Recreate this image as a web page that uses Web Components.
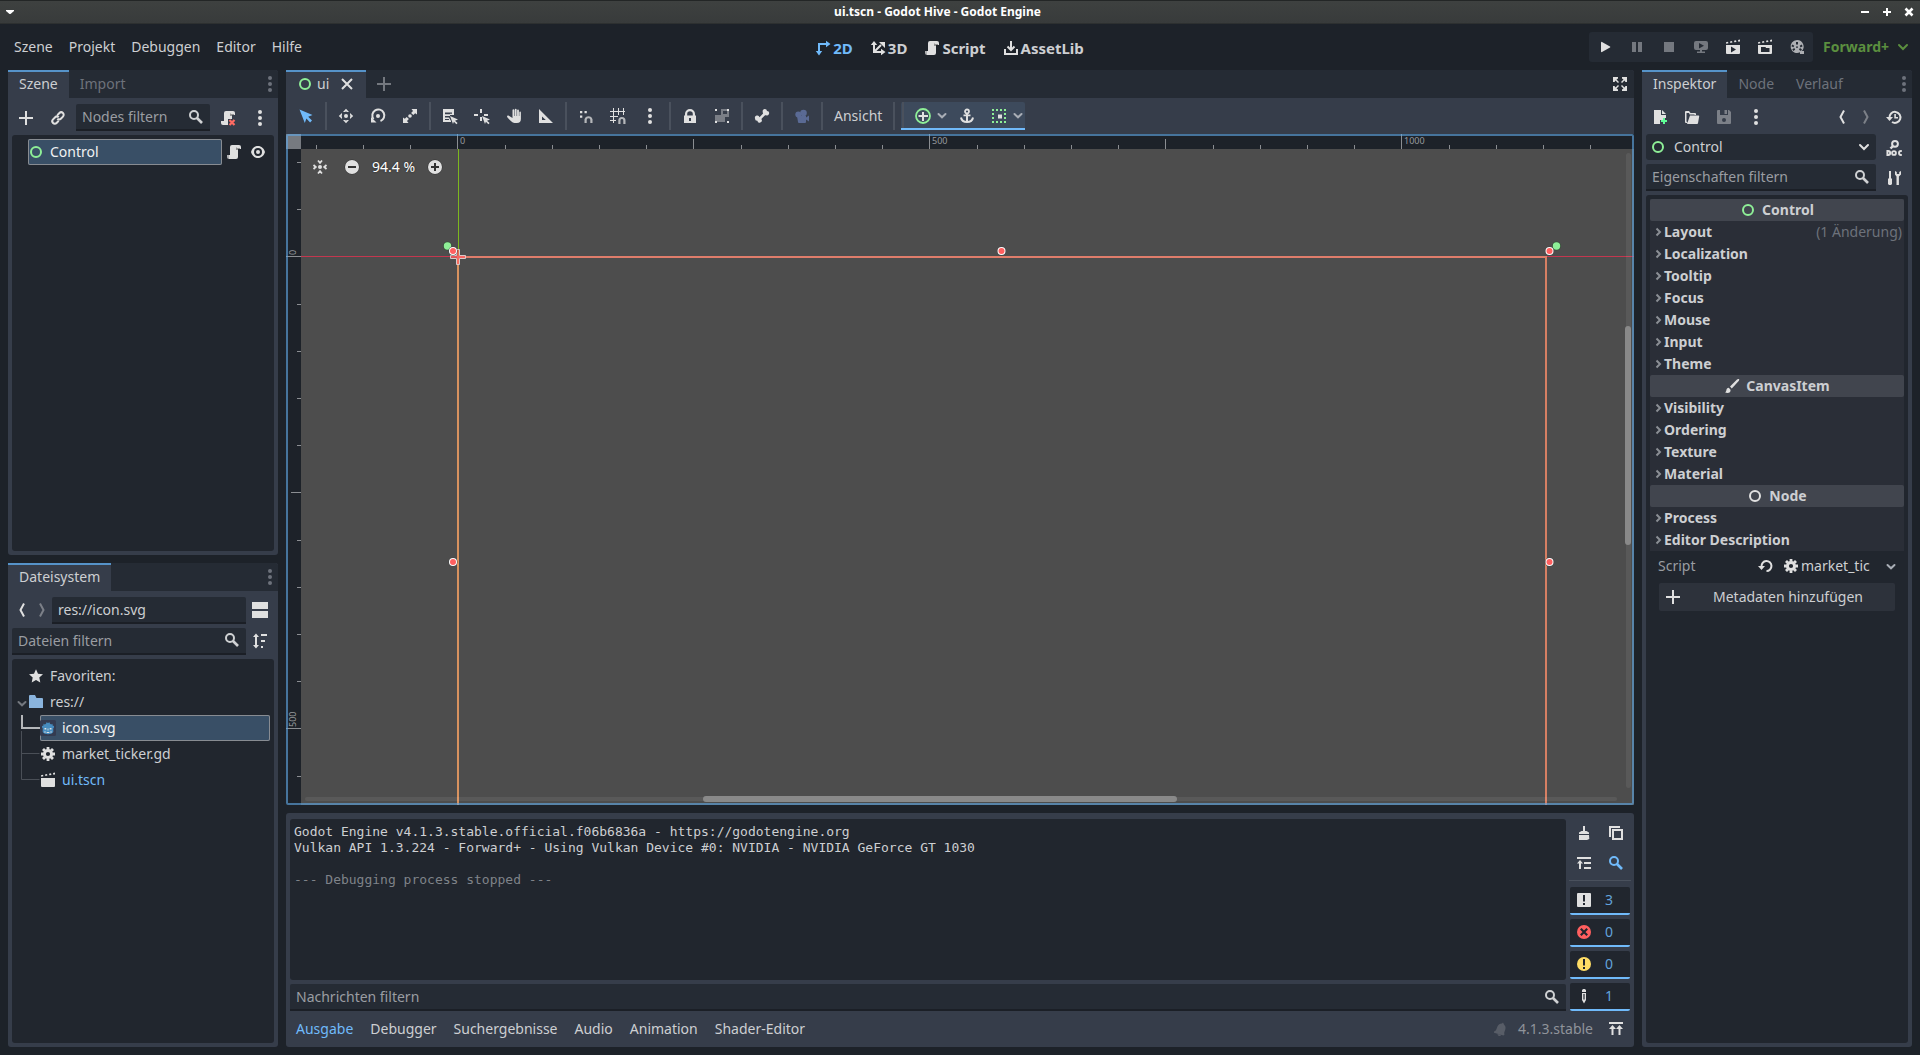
<!DOCTYPE html>
<html lang="de">
<head>
<meta charset="utf-8">
<title>ui.tscn - Godot Hive - Godot Engine</title>
<style>
html,body{height:100%;margin:0}
body{
  --bg:#1d2229;--bar:#252b34;--panel:#363d4a;--well:#21262e;--text:#cdcfd2;--dim:#6d727b;--soft:#9a9da2;
  --icon:#e0e0e0;--accent:#70bafa;--line:#5693c9;--green:#8eef97;
  background:var(--bg);color:var(--text);font:14px/20px "Noto Sans","Open Sans",sans-serif;overflow:hidden}
</style>
</head>
<body>
<godot-editor></godot-editor>
<script>
const K='fill="none" stroke="currentColor"';
const CURSOR='<path d="M8 8l8 3.4-3 1.3 2.6 2.4-1.2 1.2-2.5-2.5L11 16z"/>';
const SCROLL='<path d="M6 1a2 2 0 0 0-2 2v8h5v2a2 2 0 0 1-2 2h3a2 2 0 0 0 2-2V5h3V3a2 2 0 0 0-2-2z"/><path opacity=".75" d="M1 11h3v4H3a2 2 0 0 1-2-2z"/><path d="M3 11h6v4H3z"/><path opacity=".55" fill="#555" d="M10 3v3h2V5h2V4h-3z"/>';
const MAGNET='<path opacity=".75" '+K+' stroke-width="2.2" d="M9.4 16v-3.5a2.4 2.4 0 0 1 5 0V16"/>';
const CLAP='<path d="M1 6h14v8a1 1 0 0 1-1 1H2a1 1 0 0 1-1-1z"/><path d="M1 3.2l2-.4.4 1.5-2.2.5zM5 2.4l2-.4.4 1.5-2 .4zM9 1.7l2-.4.4 1.6-2 .3zM13 1l2-.4V2.400l-1.700.3z"/>';
const ICONS={
 add:'<path d="M7 1v6H1v2h6v6h2V9h6V7H9V1z"/>',
 link:'<g transform="rotate(-45 8 8)" '+K+' stroke-width="2"><path d="M6.500 10.500h-3a2.500 2.500 0 0 1 0-5h3a2.500 2.500 0 0 1 2.500 2.500M9.500 5.500h3a2.500 2.500 0 0 1 0 5h-3A2.500 2.500 0 0 1 7 8"/></g>',
 search:'<g '+K+'><circle cx="6" cy="6" r="4" stroke-width="2"/><path stroke-width="2.600" d="M9 9l5 5"/></g>',
 dots:'<circle cx="8" cy="2" r="2"/><circle cx="8" cy="8" r="2"/><circle cx="8" cy="14" r="2"/>',
 script:SCROLL,
 scriptx:'<path d="M6 1a2 2 0 0 0-2 2v8h4v-2h4V5h3V3a2 2 0 0 0-2-2zM1 11h7v4H3a2 2 0 0 1-2-2z"/><path fill="#555" opacity=".55" d="M10 3v3h2V5h2V4h-3z"/><path stroke="#ff6b63" stroke-width="2.200" d="M9.500 10l5 5M14.500 10l-5 5"/>',
 eye:'<path fill-rule="evenodd" d="M8 2C4.500 2 2 4.500 1 8c1 3.500 3.500 6 7 6s6-2.500 7-6c-1-3.500-3.500-6-7-6zm0 2a4 4 0 1 1 0 8 4 4 0 0 1 0-8z"/><circle cx="8" cy="8" r="2"/>',
 ring:'<circle cx="8" cy="8" r="5" '+K+' stroke-width="2"/>',
 close:'<path '+K+' stroke-width="2" d="M3 3l10 10M13 3L3 13"/>',
 select:'<path d="M1.500 1.500l13 5.500-4.300 1.700 3.800 3.900-1.900 1.900-3.700-3.900L6.800 15z"/>',
 move:'<circle cx="8" cy="8" r="2"/><path d="M8 .8l3 3.200H9.200L8 3.600 6.800 4H5zM8 15.200l3-3.200H9.200l-1.200.4-1.200-.4H5zM.8 8L4 5v1.800L3.600 8l.4 1.200V11zM15.200 8L12 5v1.800l.4 1.200-.4 1.200V11z"/>',
 rotate:'<path '+K+' stroke-width="2" d="M10.500 13A6 6 0 1 0 3.500 11"/><path d="M1 9v5.500h5.500z"/><circle cx="8" cy="8" r="2"/>',
 scale:'<path d="M9.500 1H15v5.500l-1.800-1.300-1.900 1.900-2.200-2.200L11 3zM6.500 15H1V9.500l1.800 1.300 1.900-1.900 2.200 2.200L5 13z"/><circle cx="8" cy="8" r="1.800"/>',
 listsel:'<path fill-rule="evenodd" d="M1 1h11v6H8V5.800h2V4.600H3v1.600h5V8H3v1.600h4L9 13v1H1zM3 12v-1h4v1z"/>'+CURSOR,
 pivot:'<path d="M6 1h2v4H6zM6 9h2v4H6zM0 6h4v2H0zM10 6h4v2h-4z"/>'+CURSOR,
 pan:'<path d="M6.500 2.200a.9.900 0 0 1 1.800 0V8h.5V1.600a.9.900 0 0 1 1.800 0V8h.5V2.400a.9.900 0 0 1 1.800 0V8h.4V4.400a.8.800 0 0 1 1.600 0V11a4 4 0 0 1-4 4H8.500C6 15 3.500 11.500 1.300 9.200c-.8-1 .5-2 1.500-1.400L6.500 10z"/>',
 ruler:'<path fill-rule="evenodd" d="M1 1v14h14zm3 7.500L7.800 12H4z"/>',
 snap:'<path d="M2 3h2.300v2.300H2zM6.500 3h2.300v2.300H6.500zM2 7.500h2.300v2.300H2z"/><path opacity=".75" '+K+' stroke-width="2.200" d="M7.600 15v-3.500a3 3 0 0 1 5.800 0V15"/>',
 gridsnap:'<path d="M3 0h1v15H3zM8 0h1v7H8zM13 0h1v7h-1zM0 3h15v1H0zM0 8h8v1H0zM0 12h6v1H0z"/>'+MAGNET,
 lock:'<path fill-rule="evenodd" d="M8 1a5 5 0 0 0-5 5v1.500H2V15h12V7.500h-1V6a5 5 0 0 0-5-5zm0 2.200A2.800 2.800 0 0 1 10.800 6v1.500H5.200V6A2.800 2.800 0 0 1 8 3.200zM7 10h2v3H7z"/>',
 group:'<path d="M1 1h2v2H1zM13 1h2v2h-2zM1 13h2v2H1zM13 13h2v2h-2z"/><path opacity=".4" d="M7 1h6v2H9v3h4V3h2v6h-4v5H3v1H1V7h6z"/>',
 bone:'<path d="M10.800 1a2.200 2.200 0 0 0-2 3 2 2 0 0 0 .3 1.500L5.500 9.200A2.300 2.300 0 0 0 1 10.500a2.200 2.200 0 0 0 2.400 2.200 2.200 2.200 0 1 0 4.100-1.400c-.1-.5 0-.6.300-.9l3-3c.4-.3.600-.3 1.200-.2a2.200 2.200 0 1 0 1-4.200A2.200 2.200 0 0 0 10.800 1z"/>',
 camera:'<circle cx="9.500" cy="5" r="3.300"/><circle cx="4.300" cy="6.500" r="3"/><path d="M3 8h9v6a1 1 0 0 1-1 1H5a1 1 0 0 1-1-1zM12 9.500L15 7.500v6l-3-2z"/>',
 anchor:'<circle cx="8" cy="3.500" r="2" '+K+' stroke-width="1.800"/><path d="M7 5h2v8H7zM4.500 6.500h7v1.800h-7z"/><path '+K+' stroke-width="2" d="M2 9.500c.5 3 3 4.500 6 4.500s5.500-1.500 6-4.500"/>',
 cpos:'<circle cx="8" cy="8" r="7" fill="none" stroke="#8eef97" stroke-width="1.800"/><path d="M7 4h2v3h4v2H9v4H7V9H3.500V7H7z"/>',
 cbox:'<g fill="#8eef97"><path d="M1 1h2v2H1zM5 1h2v2H5zM9 1h2v2H9zM13 1h2v2h-2zM1 13h2v2H1zM5 13h2v2H5zM9 13h2v2H9zM13 13h2v2h-2zM1 5h2v2H1zM1 9h2v2H1zM13 5h2v2h-2zM13 9h2v2h-2z"/></g><path d="M7 6.500h4v4H7z"/>',
 chev:'<path '+K+' stroke-width="2" stroke-linecap="round" d="M4.500 7L8 10.300 11.500 7"/>',
 chevbig:'<path '+K+' stroke-width="2" stroke-linecap="round" d="M4 6l4 4 4-4"/>',
 right:'<path '+K+' stroke-width="2" d="M6.500 4.500L10 8l-3.500 3.500"/>',
 back:'<path '+K+' stroke-width="2" d="M10 1.500L6.500 8l3.500 6.500"/>',
 fwd:'<path '+K+' stroke-width="2" d="M6 1.500L9.500 8 6 14.500"/>',
 mode2d:'<path '+K+' stroke-width="2" d="M4 12V4h8"/><path d="M11 .8L15.500 4 11 7.200zM.8 11L4 15.500 7.200 11z"/>',
 mode3d:'<path '+K+' stroke-width="2" d="M4 3v9h9M4 12l7-7"/><path d="M.8 5L4 1l3.200 4zM11 8.800L15.500 12 11 15.200zM9 2h6v6z"/>',
 asset:'<path d="M1 9v6h14V9h-2v4H3V9z"/><path '+K+' stroke-width="2" d="M8 1v9M4.500 6.500L8 10l3.500-3.500"/>',
 play:'<path d="M4 3.500v9a.7.700 0 0 0 1 .5l8-4.500a.6.600 0 0 0 0-1L5 3a.7.700 0 0 0-1 .5z"/>',
 pause:'<path d="M3 3h4v10H3zM9 3h4v10H9z"/>',
 stop:'<path d="M3 3h10v10H3z"/>',
 remote:'<path fill-rule="evenodd" d="M3 2h10a2 2 0 0 1 2 2v5a2 2 0 0 1-2 2H9v1.500h3V14H4v-1.500h3V11H3a2 2 0 0 1-2-2V4a2 2 0 0 1 2-2zm3 2v5.500l5-2.700z"/>',
 playscene:CLAP.replace('v8a1 1 0 0 1-1 1H2a1 1 0 0 1-1-1z','v8a1 1 0 0 1-1 1H2a1 1 0 0 1-1-1zM6 7.500v6l5-3z').replace('<path','<path fill-rule="evenodd"'),
 playcustom:CLAP.replace('v8a1 1 0 0 1-1 1H2a1 1 0 0 1-1-1z','v8a1 1 0 0 1-1 1H2a1 1 0 0 1-1-1zM4 8v5h8.500V9H9L8.500 8z').replace('<path','<path fill-rule="evenodd"'),
 clap:CLAP,
 movie:'<path fill-rule="evenodd" d="M8 1a6.500 6.500 0 1 0 3 12.300V15h4v-3h-2.200A6.500 6.500 0 0 0 8 1zM7 3h2v2.500H7zM3.300 5.500l2 1.200-.9 1.600-2-1zM10.700 6.700l2-1.200.9 1.700-2 1.200zM3.300 10.200l2-1.200.9 1.700-2 1.200zM10 10.700l.9-1.700 2 1.200-.9 1.700zM7 7.500h2v1.200H7z"/>',
 expand:'<path d="M1 1h5v1.500L4.500 3.500 7 6 6 7 3.500 4.500 2.500 6H1zM15 1h-5v1.500l1.500 1L9 6l1 1 2.500-2.500 1 1.500H15zM1 15h5v-1.500l-1.500-1L7 10 6 9l-2.500 2.500-1-1.500H1zM15 15h-5v-1.500l1.500-1L9 10l1-1 2.500 2.500 1-1.500H15z"/>',
 newres:'<path d="M2 1h7v5h5v3h-3v2H8v4H2z"/><path d="M10 1l4 4h-4z"/><path fill="#5fff97" d="M11 9h2v2h2v2h-2v2h-2v-2H9v-2h2z"/>',
 open:'<path d="M1 3a1 1 0 0 1 1-1h3l1.500 2H11a1 1 0 0 1 1 1v1h-1.500V5.500H5.600L5 4H2.500v8.500L4 14H2a1 1 0 0 1-1-1z"/><path d="M6 6.500h8.500a.7.700 0 0 1 .7.800L14 14.300a1 1 0 0 1-1 .7H3z"/>',
 save:'<path fill-rule="evenodd" d="M2 1h2v5h8V1h1l2 2v11a1 1 0 0 1-1 1H2a1 1 0 0 1-1-1V2a1 1 0 0 1 1-1zm6 8a2 2 0 1 0 0 4 2 2 0 0 0 0-4z"/><path d="M8.500 1H11v4H8.500z"/>',
 history:'<path '+K+' stroke-width="2" d="M3.500 9A5.500 5.500 0 1 1 6 13"/><path d="M0 8h7L3.500 12zM8.300 5h1.600v3H12v1.600H8.300z"/>',
 doc:'<circle cx="9" cy="3.800" r="2.900" '+K+' stroke-width="2"/><path '+K+' stroke-width="2.400" d="M7.200 5.800L4.500 8.500"/><g '+K+' stroke-width="1.900"><path d="M1.400 11v4h.8a2 2 0 0 0 0-4z"/><circle cx="8" cy="13" r="1.900"/><path d="M15.800 11H15a2 2 0 0 0 0 4h.8"/></g>',
 tools:'<path d="M3 1h2v7.500h1V14l-1 1H3l-1-1V8.500h1zM9 1v3.500l1.500 2V15h2.400V6.500L15 4.500V1l-1.800 1v2h-2.400V2z"/>',
 brush:'<path d="M15 1c-.8-.3-1.500 0-2 .4L6 8.500l1.800 1.900L14.700 3c.5-.6.700-1.400.3-2zM4.800 9.700c-1.500 0-2.300 1-2.400 2.300-.1 1.200-.6 2-1.400 2.300 2.700 1.500 6.200.3 5.500-2.600z"/>',
 revert:'<path '+K+' stroke-width="2" d="M3.500 8.500A5 5 0 1 1 8.500 13"/><path d="M0 8h7l-3.500 4z"/>',
 gear:'<circle cx="8" cy="8" r="3.600" '+K+' stroke-width="3"/><path '+K+' stroke-width="2.800" d="M8 1v2.500M8 12.500V15M1 8h2.500M12.500 8H15M3 3l1.800 1.800M11.200 11.200L13 13M13 3l-1.800 1.800M4.800 11.200L3 13"/>',
 split:'<path d="M0 0h16v7H0zM0 9h16v7H0z"/>',
 sort:'<path d="M3 4v8H1l3 3.500L7 12H5V4h2L4 .5 1 4zM9 1h6v2H9zM9 7h4v2H9zM9 13h2v2H9z"/>',
 star:'<path d="M8 1.200l2 4.500 5 .6-3.700 3.300 1 4.900L8 12l-4.300 2.500 1-4.900L1 6.300l5-.6z"/>',
 folder:'<path d="M1 2a1 1 0 0 1 1-1h5l1.500 3H14a1 1 0 0 1 1 1v9H1z"/>',
 godot:'<path fill="#343b50" d="M1.500 0h13A1.500 1.500 0 0 1 16 1.500v13a1.500 1.500 0 0 1-1.500 1.500h-13A1.500 1.500 0 0 1 0 14.500v-13A1.500 1.500 0 0 1 1.500 0z"/><path fill="#478cbf" d="M3.500 5.500V3.800l1.300.6 1.200-.6.500-1.600 1.500.7 1.500-.7.500 1.600 1.200.6 1.300-.6v1.700L14 6v1.500l-.7.700V12c-1 1.500-3 2.200-5.300 2.200S3.700 13.500 2.700 12V8.200L2 7.500V6z"/><path fill="#e0e0e0" d="M4.500 8h1.800v1.600H4.500zM9.700 8h1.800v1.600H9.700zM7.600 8.500h.8v2h-.8zM4.200 11.500h1.500v1H4.200zM10.300 11.500h1.500v1h-1.500zM6.700 12h2.600v1H6.700z"/>',
 center:'<circle cx="8" cy="8" r="2"/><path '+K+' stroke-width="1.800" d="M6 1.500l2 2.300 2-2.300M6 14.500l2-2.300 2 2.300M1.500 6l2.300 2-2.300 2M14.500 6l-2.300 2 2.300 2"/>',
 minus:'<circle cx="8" cy="8" r="7.500" fill="#333"/><circle cx="8" cy="8" r="7"/><path fill="#333" d="M4 7h8v2H4z"/>',
 plus:'<circle cx="8" cy="8" r="7.500" fill="#333"/><circle cx="8" cy="8" r="7"/><path fill="#333" d="M7 4h2v3h3v2H9v3H7V9H4V7h3z"/>',
 broom:'<path d="M7 1h2v5h1.500L13 7.500V9H3V7.500L5.500 6H7zM3 10h10l.3 4-2.300 1H3z"/>',
 copy:'<path d="M1 1h11v2H3v9H1z"/><path '+K+' stroke-width="2" d="M5 5h9v9H5z"/>',
 collapse:'<path d="M1 2h14v2H1zM8 7h7v2H8zM8 12h7v2H8zM4 5L1 8.500h2V14h2V8.500h2z"/>',
 info:'<path fill-rule="evenodd" d="M2 1h12a1 1 0 0 1 1 1v12a1 1 0 0 1-1 1H2a1 1 0 0 1-1-1V2a1 1 0 0 1 1-1zm5 2v6.500h2V3zm0 8v2h2v-2z"/>',
 error:'<circle cx="8" cy="8" r="7" fill="#ff5f5f"/><path stroke="#21262e" stroke-width="2.200" d="M4.800 4.800l6.400 6.400M11.200 4.800l-6.400 6.400"/>',
 warn:'<circle cx="8" cy="8" r="7" fill="#ffdd65"/><path fill="#21262e" d="M7 3h2v6.500H7zM7 11h2v2H7z"/>',
 pencil:'<path fill-rule="evenodd" d="M6 2.500c0-2 4-2 4 0V4H6zM6 5h4v7l-2 3.500L6 12zm1.400 1v5.500h1.200V6z"/>',
 bell:'<path d="M10 1.500l-1 1C6.500 2.500 5 4 4 6.500 3.300 8.500 3 10 1 10.500v1.300l9.500 2.700 1-1c-.8-1.500.3-3.500.8-5 .6-2 .2-3.500-1.300-5zM4.500 13a2 2 0 0 0 3.700 1z"/>',
 raise:'<path d="M1 1h14v2H1zM4.500 4L1 8h2.500v6h2V8H8zM11.500 4L8 8h2.500v6h2V8H15z"/>',
 tri:'<path d="M4 6h8v1l-3.500 3h-1L4 7z"/>',
 wmin:'<path d="M4 7h8v2H4z"/>',
 wmax:'<path d="M7 4h2v3h3v2H9v3H7V9H4V7h3z"/>',
 wclose:'<path '+K+' stroke-width="2.600" d="M4.500 4.500l7 7M11.500 4.500l-7 7"/>'
};

/* Every element renders its template once into an open shadow root. */
const BASE=`*{box-sizing:border-box}
button,input,select{font:inherit;color:inherit;background:none;border:0;margin:0;padding:0;outline:0}
button{display:flex;align-items:center;white-space:nowrap}
.row{display:flex;align-items:center}.grow{flex:1;min-width:0}`;
function define(name,css,html){
  customElements.define(name,class extends HTMLElement{
    connectedCallback(){
      if(this.shadowRoot)return;
      this.attachShadow({mode:'open'}).innerHTML=`<style>${BASE}${css}</style>${typeof html==='function'?html(this):html}`;
    }
  });
}
const icon=(n,c)=>`<g-icon name="${n}"${c?` style="color:${c}"`:''}></g-icon>`;
const tool=(n,label,c)=>`<g-tool icon="${n}" label="${label}"${c?` style="color:${c}"`:''}></g-tool>`;

define('g-icon',`:host{display:block;flex:none;width:16px;height:16px;color:var(--icon)}svg{display:block;overflow:visible}`,
 e=>`<svg width="16" height="16" viewBox="0 0 16 16" fill="currentColor" aria-hidden="true">${ICONS[e.getAttribute('name')]}</svg>`);

define('g-tool',`:host{display:block;flex:none;color:var(--icon);width:28px}
button{width:100%;height:28px;justify-content:center}g-icon{color:inherit}`,
 e=>`<button aria-label="${e.getAttribute('label')}"><g-icon name="${e.getAttribute('icon')}"></g-icon></button>`);

define('g-field',`:host{display:block;flex:1;min-width:0}
label{display:flex;align-items:center;height:27px;padding:0 6px;background:var(--bar);border-bottom:2px solid #1b1f26;border-radius:2px 2px 0 0}
input{flex:1;min-width:0;height:25px}input::placeholder{color:var(--soft);opacity:1}g-icon{color:#cfd1d3}`,
 e=>`<label><input type="text" aria-label="${e.getAttribute('label')}" placeholder="${e.getAttribute('hint')||''}" value="${e.getAttribute('value')||''}">${e.hasAttribute('search')?icon('search','#cfd1d3'):''}</label>`);

define('g-dock',`:host{display:flex;flex-direction:column;min-height:0;border-radius:3px;background:var(--panel)}
.tabs{height:28px;background:var(--bar);border-radius:0 3px 0 0;align-items:stretch;flex:none}
.tabs button{padding:0 11px;color:var(--dim)}
.tabs button:first-child{background:var(--panel);color:var(--text);border-top:2px solid var(--line);padding-bottom:2px}
.tabs g-icon{margin:6px 0 0;color:var(--dim)}
.body{flex:1;min-height:0;display:flex;flex-direction:column;padding:6px 4px 4px;gap:4px}`,
 e=>`<div class="row tabs" role="tablist">${e.getAttribute('tabs').split('|').map((t,i)=>`<button role="tab" aria-selected="${!i}">${t}</button>`).join('')}<span class="grow"></span><g-icon name="dots"></g-icon></div><div class="body"><slot></slot></div>`);

define('g-titlebar',`:host{display:flex;align-items:center;box-sizing:border-box;height:24px;padding:0 3px 0 2px;background:linear-gradient(#3e4140,#383b3b);border-top:1px solid #232626;border-bottom:1px solid #2d3030;color:#fff}
h1{flex:1;margin:0;text-align:center;font-size:12px;font-weight:700;line-height:20px}
nav{display:flex;gap:6px}g-icon{color:#fff}`,
 `${icon('tri','#fff')}<h1>ui.tscn - Godot Hive - Godot Engine</h1><nav>${icon('wmin','#fff')}${icon('wmax','#fff')}${icon('wclose','#fff')}</nav>`);

define('g-menubar',`:host{display:flex;align-items:center;justify-content:space-between;height:46px;padding:0 7px 0 14px}
.menu{gap:16px;padding-right:8px}
.modes{gap:17px;font-weight:700;font-size:15px;padding-top:2px}.modes button{gap:2px}.modes .on{color:var(--accent)}
.right{justify-content:flex-end;gap:10px}
.run{background:var(--bar);border-radius:3px;height:30px;gap:4px;padding:0 2px}
.fwd{color:#5b8f3f;font-weight:700;gap:6px;padding-right:2px}`,
 `<nav class="row menu">${['Szene','Projekt','Debuggen','Editor','Hilfe'].map(t=>`<button>${t}</button>`).join('')}</nav>
 <nav class="row modes"><button class="on">${icon('mode2d','var(--accent)')}2D</button><button>${icon('mode3d')}3D</button><button>${icon('script')}Script</button><button>${icon('asset')}AssetLib</button></nav>
 <div class="row right"><div class="row run">${tool('play','Projekt abspielen')}${tool('pause','Pausieren','#74787f')}${tool('stop','Stoppen','#74787f')}${tool('remote','Remote Debug','#74787f')}${tool('playscene','Szene abspielen')}${tool('playcustom','Eigene Szene abspielen')}${tool('movie','Movie Maker','#adafb3')}</div>
 <button class="fwd">Forward+ ${icon('chevbig','#5b8f3f')}</button></div>`);

define('g-scene-tree',`:host{display:block;flex:1;background:var(--well);border-radius:3px;padding:4px 8px 4px 16px}
.row{gap:8px}.node{flex:1;height:26px;gap:6px;margin-right:-4px;color:#f0f1f2;background:#394f66;box-shadow:inset 0 0 0 1px #888c92;border-radius:2px}`,
 `<div class="row"><button class="node">${icon('ring','var(--green)')}<span>Control</span></button>${icon('script')}<g-icon name="eye"></g-icon></div>`);

define('g-file-tree',`:host{display:block;flex:1;background:var(--well);border-radius:3px;padding:4px 4px 0 16px}
ul{list-style:none;margin:0;padding:0}li{display:flex;align-items:center;height:26px;gap:6px}
.open{position:relative}.fold{position:absolute;left:-14px;top:6px}
.kids{display:block;height:auto}
ul ul{position:relative;padding-left:12px}
.sel{background:#394f66;box-shadow:inset 0 0 0 1px #888c92;border-radius:2px;color:#f0f1f2}
.scene{color:var(--accent)}svg{position:absolute;left:-7px;top:0}`,
 `<ul><li>${icon('star')}Favoriten:</li><li class="open"><span class="fold">${icon('chev','#74787f')}</span>${icon('folder','#8ab4de')}res://</li>
 <li class="kids"><ul><svg width="20" height="78" aria-hidden="true" fill="none"><path stroke="#4a4f57" d="M.5 16v48.500h18M.5 38.500h18"/><path stroke="#b5b7ba" stroke-width="2" d="M1 0v13h18"/></svg><li class="sel">${icon('godot')}icon.svg</li><li>${icon('gear')}market_ticker.gd</li><li class="scene">${icon('clap')}ui.tscn</li></ul></li></ul>`);

define('g-canvas-toolbar',`:host{display:flex;align-items:center;box-sizing:border-box;height:36px;padding-left:6px;gap:4px;flex:none}
i{width:2px;height:28px;margin:0 1px;background:#4a515d}
.view{padding:0 6px}
.ctx{height:28px;padding:0 3px 0 1px;background:#3d4a5c;border-bottom:2px solid var(--accent);border-radius:2px 2px 0 0;margin-left:1px}
.ctx g-tool{margin-top:2px}.ctx i{margin:0 5px 0 0;height:26px}.ctx .dd{width:12px;margin-left:-3px;color:#a9aeb6}.ctx .mode{margin:2px 4px 0 7px}`,
 ()=>`${tool('select','Auswählen','var(--accent)')}<i></i>${tool('move','Verschieben')}${tool('rotate','Drehen')}${tool('scale','Skalieren')}<i></i>${tool('listsel','Liste')}${tool('pivot','Pivot')}${tool('pan','Schwenken')}${tool('ruler','Lineal')}<i></i>${tool('snap','Einrasten')}${tool('gridsnap','Am Raster einrasten')}${tool('dots','Mehr')}<i></i>${tool('lock','Sperren')}${tool('group','Gruppieren')}<i></i>${tool('bone','Skelett')}<i></i>${tool('camera','Kamera','#5a6a94')}<i></i><button class="view">Ansicht</button><i></i>
 <div class="row ctx"><i></i>${tool('cpos','Anker')}<g-icon class="dd" name="chev"></g-icon><g-tool class="mode" icon="anchor" label="Ankermodus"></g-tool>${tool('cbox','Container')}<g-icon class="dd" name="chev"></g-icon></div>`);

function scene(){
  const ox=171,oy=122,step=47.2,gray='#8b8e92';let s='';
  for(let k=-3;k<60;k++){const x=Math.ceil(ox+step*k),h=k%10==0?15:k%5==0?10:4;
    if(x>15)s+=`<rect x="${x}" y="${15-h}" width="1" height="${h}" fill="${gray}"/>`;
    if(k%10==0&&k>=0&&k<=20)s+=`<text x="${x+3}" y="10">${k*50}</text>`}
  for(let k=-2;k<40;k++){const y=Math.ceil(oy+step*k),w=k%10==0?15:k%5==0?10:4;
    s+=`<rect x="${15-w}" y="${y}" width="${w}" height="1" fill="${gray}"/>`;
    if(k==0||k==10)s+=`<text transform="translate(10 ${y-1}) rotate(-90)">${k*50}</text>`}
  const dot=(x,y)=>`<circle cx="${x}" cy="${y}" r="4.500" fill="#444"/><circle cx="${x}" cy="${y}" r="4" fill="#fff"/><circle cx="${x}" cy="${y}" r="3" fill="#ff5f5f"/>`;
  const pin=(x,y)=>`<circle cx="${x}" cy="${y}" r="4.500" fill="#36533a"/><circle cx="${x}" cy="${y}" r="3.700" fill="#8eef97"/>`;
  return `<svg width="100%" height="100%"><rect width="100%" height="100%" fill="#4d4d4d"/>
  <rect width="100%" height="15" fill="#1d2229"/><rect width="15" height="100%" fill="#1d2229"/>
  <rect x="15" y="${oy}" width="100%" height="1" fill="#c3374f"/><rect x="172" y="15" width="1" height="107" fill="#7db71e"/>
  <rect x="171" y="122" width="1090" height="2" fill="#df7d6b"/><rect x="171" y="124" width="2" height="100%" fill="#d8925f"/><rect x="1259" y="123" width="2" height="100%" fill="#d67f63"/>
  <g class="lab">${s}</g><rect width="15" height="15" fill="#767a80"/>
  <path fill="#ff5f5f" fill-opacity=".75" stroke="#d8c9c9" d="M170.500 115.500h3v6h6v3h-6v6h-3v-6h-6v-3h6z"/>
  ${pin(161.5,112)}${pin(1270.5,112)}${dot(167,117)}${dot(715.5,117)}${dot(1263.5,117)}${dot(167,428)}${dot(1263.5,428)}</svg>`;
}
define('g-viewport',`:host{display:block;flex:1;position:relative;min-height:0;overflow:hidden}
svg{display:block;position:absolute;inset:0}.lab text{font-size:9px;fill:#96999d}
.edge{position:absolute;inset:0;border:2px solid #60a5e0a0;border-radius:2px}
.zoom{position:absolute;left:20px;top:19px;gap:4px;color:#fff;text-shadow:0 0 2px #222}
.zoom span{padding:0 2px}
.v,.h{position:absolute;background:#ffffff12;border-radius:3px}
.v{width:5px;right:3px;top:19px;bottom:17px}.h{height:4px;left:19px;right:17px;bottom:4px}
.v i,.h i{position:absolute;background:#898989;border-radius:3px}
.v i{left:-1px;width:6px;top:27.300%;height:34.500%}.h i{top:-1px;height:6px;left:30.300%;width:36.200%}`,
 ()=>`${scene()}<div class="v"><i></i></div><div class="h"><i></i></div><div class="edge"></div>
 <div class="row zoom">${tool('center','Ansicht zentrieren')}${tool('minus','Verkleinern')}<span>94.4 %</span>${tool('plus','Vergrößern')}</div>`);

define('g-main',`:host{display:flex;flex-direction:column;min-height:0;background:var(--panel);border-radius:3px}
.tabs{height:28px;background:var(--bar);align-items:stretch;flex:none;border-radius:0 3px 0 0}
.tab{background:var(--panel);border-top:2px solid var(--line);padding:0 11px 2px;gap:4px}
.tab .x{margin-left:6px}.tabs g-tool{margin-left:4px}.tabs g-tool:last-child{margin-left:0}`,
 `<div class="row tabs"><button class="tab" role="tab">${icon('ring','var(--green)')}<span>ui</span><g-icon class="x" name="close"></g-icon></button>${tool('add','Neue Szene','#74787f')}<span class="grow"></span>${tool('expand','Ablenkungsfrei')}</div>
 <g-canvas-toolbar></g-canvas-toolbar><g-viewport></g-viewport>`);

define('g-count',`:host{display:block;margin-top:4px}
button{width:60px;height:28px;padding:0 6px;gap:13px;background:var(--well);border-bottom:2px solid var(--accent);border-radius:2px;color:#62a3db}`,
 e=>`<button aria-pressed="true"><g-icon name="${e.getAttribute('icon')}"></g-icon><slot></slot></button>`);

define('g-output',`:host{display:flex;flex-direction:column;box-sizing:border-box;height:234px;background:var(--panel);border-radius:3px;padding:6px 4px 0}
.main{display:flex;gap:4px;flex:1;min-height:0}
.left{flex:1;display:flex;flex-direction:column;gap:4px}g-field{flex:none}
pre{flex:1;margin:0;padding:5px 4px;background:var(--well);border-radius:3px;font:13px/16px "DejaVu Sans Mono","Liberation Mono",monospace}
pre span{color:#7f8389}
.side{width:60px}
.grid{display:grid;grid-template-columns:28px 28px;gap:2px 4px}
hr{width:62px;margin:3px -1px 6px;border:0;height:1px;background:#4a515d}hr+g-count{margin-top:0}
.foot{height:36px;gap:17px;padding:0 0 0 6px}.foot .on{color:var(--accent)}.ver{gap:9px;color:#8f939a}`,
 `<div class="main"><div class="left"><pre>Godot Engine v4.1.3.stable.official.f06b6836a - https://godotengine.org
Vulkan API 1.3.224 - Forward+ - Using Vulkan Device #0: NVIDIA - NVIDIA GeForce GT 1030

<span>--- Debugging process stopped ---</span></pre><g-field search label="Nachrichten filtern" hint="Nachrichten filtern"></g-field></div>
 <div class="side"><div class="grid">${tool('broom','Leeren')}${tool('copy','Kopieren')}${tool('collapse','Duplikate')}${tool('search','Suche','var(--accent)')}</div><hr>
 <g-count icon="info">3</g-count><g-count icon="error">0</g-count><g-count icon="warn">0</g-count><g-count icon="pencil">1</g-count></div></div>
 <div class="row foot"><button class="on">Ausgabe</button>${['Debugger','Suchergebnisse','Audio','Animation','Shader-Editor'].map(t=>`<button>${t}</button>`).join('')}<span class="grow"></span>
 <div class="row ver">${icon('bell','#585d67')}<button>4.1.3.stable</button>${tool('raise','Vergrößern')}</div></div>`);

define('g-category',`:host{display:block;background:#2a2e37}
h2{display:flex;align-items:center;justify-content:center;gap:6px;height:22px;margin:0;font-size:14px;line-height:20px;background:#41454e;border-radius:2px}`,
 e=>`<h2><g-icon name="${e.getAttribute('icon')}" style="color:${e.getAttribute('tint')||'var(--icon)'}"></g-icon>${e.getAttribute('label')}</h2><slot></slot>`);
define('g-section',`:host{display:block}
button{width:100%;height:22px;font-weight:700}g-icon{margin-right:-2px}em{margin-left:auto;padding-right:2px;font-style:normal;font-weight:400;color:var(--dim)}`,
 e=>`<button aria-expanded="false"><g-icon name="right" style="color:#8b8f95"></g-icon><slot></slot>${e.hasAttribute('note')?`<em>${e.getAttribute('note')}</em>`:''}</button>`);

define('g-inspector',`:host{display:flex;flex-direction:column;flex:1;gap:4px;min-height:0}
.bar{gap:4px;height:26px}.pair{gap:4px}
.bar .nav{width:20px}
.obj{flex:1;height:26px;background:var(--bar);border-radius:3px;padding:0 4px}
.obj select{appearance:none;flex:1;padding-left:8px;height:26px}
.pair g-tool{width:28px;height:27px}
.pair.first{height:26px}
.list{flex:1;background:var(--well);border-radius:3px;padding:4px}
.prop{height:29px;padding:0 5px 0 8px}.prop label{flex:1;color:var(--soft)}.prop .val{width:116px;margin-left:9px;gap:2px;overflow:hidden}.prop .val span{flex:1;overflow:hidden;text-align:left}
.meta{width:calc(100% - 18px);height:28px;margin:3px 9px;padding-left:6px;background:#2d323b;border-radius:2px}.meta span{flex:1;text-align:center}`,
 ()=>{const sec=(a)=>a.map(t=>`<g-section>${t}</g-section>`).join('');
 return `<div class="row bar">${tool('newres','Neue Ressource')}${tool('open','Laden')}${tool('save','Speichern','#7c8088')}${tool('dots','Mehr')}<span class="grow"></span><g-tool class="nav" icon="back" label="Zurück"></g-tool><g-tool class="nav" icon="fwd" label="Vor" style="color:#7c8088"></g-tool>${tool('history','Verlauf')}</div>
 <div class="row pair first"><div class="row obj">${icon('ring','var(--green)')}<select aria-label="Objekt"><option>Control</option></select>${icon('chevbig')}</div>${tool('doc','Dokumentation')}</div>
 <div class="row pair"><g-field search label="Eigenschaften filtern" hint="Eigenschaften filtern"></g-field>${tool('tools','Werkzeuge')}</div>
 <div class="list"><g-category icon="ring" tint="var(--green)" label="Control"><g-section note="(1 Änderung)">Layout</g-section>${sec(['Localization','Tooltip','Focus','Mouse','Input','Theme'])}</g-category>
 <g-category icon="brush" label="CanvasItem">${sec(['Visibility','Ordering','Texture','Material'])}</g-category>
 <g-category icon="ring" label="Node">${sec(['Process','Editor Description'])}</g-category>
 <div class="row prop"><label for="res">Script</label>${icon('revert')}<button id="res" class="val">${icon('gear')}<span>market_tic</span>${icon('chev','#a9aeb6')}</button></div>
 <button class="meta">${icon('add')}<span>Metadaten hinzufügen</span></button></div>`});

define('godot-editor',`:host{display:flex;flex-direction:column;height:100vh}
main{flex:1;min-height:0;display:grid;grid-template-columns:270px minmax(0,1fr) 270px;gap:8px;padding:0 8px 8px}
section{display:flex;flex-direction:column;gap:8px;min-height:0}
section>g-dock,g-main{flex:1}
.tools{display:flex;gap:4px;align-items:center;height:27px}
.tight{gap:0}.tools .nav{width:16px;margin:0 2px}`,
 `<g-titlebar></g-titlebar><g-menubar></g-menubar>
 <main><section><g-dock tabs="Szene|Import"><div class="tools">${tool('add','Node hinzufügen')}${tool('link','Szene instanziieren')}<g-field search label="Nodes filtern" hint="Nodes filtern"></g-field>${tool('scriptx','Script entfernen')}${tool('dots','Mehr')}</div><g-scene-tree></g-scene-tree></g-dock>
 <g-dock tabs="Dateisystem"><div class="tools tight"><g-tool class="nav" icon="back" label="Zurück"></g-tool><g-tool class="nav" icon="fwd" label="Vor" style="color:#7c8088"></g-tool><g-field label="Pfad" value="res://icon.svg"></g-field>${tool('split','Aufteilen')}</div>
 <div class="tools tight"><g-field search label="Dateien filtern" hint="Dateien filtern"></g-field>${tool('sort','Sortieren')}</div><g-file-tree></g-file-tree></g-dock></section>
 <section><g-main></g-main><g-output></g-output></section>
 <section><g-dock tabs="Inspektor|Node|Verlauf"><g-inspector></g-inspector></g-dock></section></main>`);
</script>
</body>
</html>
